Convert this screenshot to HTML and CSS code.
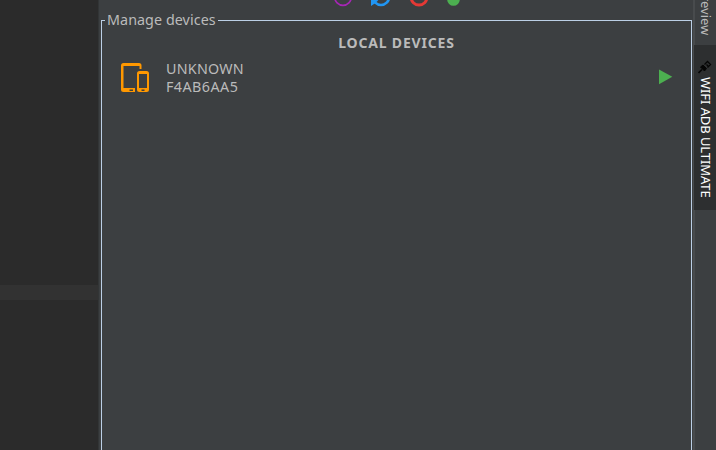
FILE: index.html
```
<!DOCTYPE html>
<html lang="en">
<head>
<meta charset="utf-8">
<title>WIFI ADB ULTIMATE</title>
<link rel="stylesheet" href="styles.css">
</head>
<body>
<div class="window">
  <div class="editor"><div class="caret-row"></div></div>
  <main class="tool">
    <div class="toolbar">
      <svg width="132" height="8" viewBox="0 0 132 8" fill="none">
        <circle cx="11" cy="-3" r="8.3" stroke="#a626b5" stroke-width="1.7"/>
        <path d="M41 -3A8 8 0 0 0 57 -3" stroke="#2196f3" stroke-width="2.7"/>
        <path d="M39 -2H48L45.500 1L43.500 3L39 6Z" fill="#2196f3"/>
        <circle cx="87" cy="-3" r="8" stroke="#e53935" stroke-width="2.9"/>
        <circle cx="121.500" cy="-.5" r="6.300" fill="#4caf50"/>
      </svg>
    </div>
    <section class="group">
      <div class="group-head"><span class="corner"></span><span class="legend">Manage devices</span><span class="rule"></span></div>
      <div class="group-body">
        <h2 class="heading">LOCAL DEVICES</h2>
        <div class="device">
          <svg class="device-icon" width="30" height="32" viewBox="0 0 30 32">
            <path fill="#ff9800" fill-rule="evenodd" d="M3.500 1H19Q21.500 1 21.500 3.500V7H19.500V4H3.500V26H15V30H3.500Q1 30 1 27.500V3.500Q1 1 3.500 1ZM9.500 27.500V29H13V27.500ZM19 9H26.500Q29 9 29 11.500V27.500Q29 30 26.500 30H19.500Q17 30 17 27.500V11.500Q17 9 19.500 9ZM19 12V26H27V12ZM21.500 27.500V29H24.500V27.500Z"/>
          </svg>
          <div class="device-text"><div class="name">UNKNOWN</div><div class="serial">F4AB6AA5</div></div>
          <svg class="play" width="14" height="16" viewBox="0 0 14 16"><path fill="#4caf50" d="M0 .5L13.300 7.800L0 15.200Z"/></svg>
        </div>
      </div>
    </section>
  </main>
  <aside class="stripe">
    <div class="tab preview"><span>Preview</span></div>
    <div class="tab active">
      <svg width="14" height="14" viewBox="0 0 14 14" fill="none" stroke="#050505">
        <path d="M.5 13L4 9.500" stroke-width="1.600"/>
        <path d="M2.500 7L6.500 11L8.500 8.500L5 5Z" fill="#050505"/>
        <path d="M6.500 4.500L9.500 1.500L12.500 4.500L9.500 7.500M8.500 4.500L10 6" stroke-width="1.300"/>
      </svg>
      <span>WIFI ADB ULTIMATE</span>
    </div>
  </aside>
</div>
</body>
</html>
```
FILE: styles.css
```
* { box-sizing: border-box; }
body { margin: 0; background: #3c3f41; color: #bbb; font: 14.3px/18px "Noto Sans", "Open Sans", sans-serif; overflow: hidden; }
.window { display: flex; height: 450px; overflow: hidden; }
.editor { width: 98px; flex: none; background: #2b2b2b; padding-top: 285px; }
.caret-row { height: 15px; background: #323232; }
.tool { flex: 1; display: flex; flex-direction: column; border-left: 1px solid #323536; padding: 0 1px 0 2px; }
.toolbar { height: 11px; padding-left: 231px; flex: none; }
.toolbar svg { display: block; }
.group { flex: 1; display: flex; flex-direction: column; }
.group-head { display: flex; height: 18px; }
.corner { width: 4px; margin-top: 9px; border-top: 1px solid #bbcfe5; border-left: 1px solid #bbcfe5; }
.legend { width: 113px; padding-left: 2px; white-space: nowrap; letter-spacing: .07px; }
.rule { flex: 1; margin-top: 9px; border-top: 1px solid #bbcfe5; border-right: 1px solid #bbcfe5; }
.group-body { flex: 1; border: solid #bbcfe5; border-width: 0 1px; padding-top: 5px; }
.heading { margin: 0; font-size: 14px; line-height: 18px; font-weight: 700; text-align: center; letter-spacing: .82px; }
.device { display: flex; height: 44px; padding: 8px 18px 0 17px; }
.device-icon { margin: 2px 16px 0 1px; }
.device-text { flex: 1; }
.name { letter-spacing: .25px; }
.serial { letter-spacing: .45px; }
.play { margin: 9px 1px 0 0; position: relative; left: 1px; }
.stripe { width: 23px; flex: none; border-left: 2px solid #484b4d; font-size: 13px; }
.tab { display: flex; align-items: center; }
.tab span { writing-mode: vertical-rl; white-space: nowrap; line-height: 21px; }
.preview { height: 45px; align-items: flex-end; padding-bottom: 10px; }
.active { height: 165px; flex-direction: column; margin-left: -1px; padding-top: 15px; background: #2d2f30; color: #fff; letter-spacing: -.08px; }
.active svg { flex: none; margin-bottom: 3px; margin-right: 1px; }
```
